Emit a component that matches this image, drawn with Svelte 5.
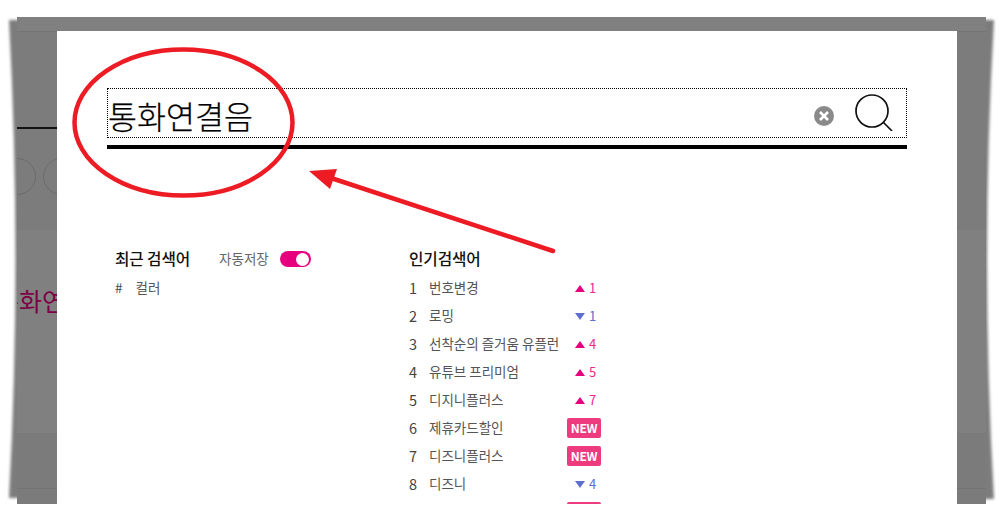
<script>
  const recent = [{ rank: '#', label: '컬러' }];
  const popular = [
    { rank: 1, label: '번호변경', dir: 'up', n: 1 },
    { rank: 2, label: '로밍', dir: 'down', n: 1 },
    { rank: 3, label: '선착순의 즐거움 유플런', dir: 'up', n: 4 },
    { rank: 4, label: '유튜브 프리미엄', dir: 'up', n: 5 },
    { rank: 5, label: '디지니플러스', dir: 'up', n: 7 },
    { rank: 6, label: '제휴카드할인', dir: 'new' },
    { rank: 7, label: '디즈니플러스', dir: 'new' },
    { rank: 8, label: '디즈니', dir: 'down', n: 4 },
    { rank: 9, label: '', dir: 'new' }
  ];
</script>

<div class="stage">
  <svg class="shadow" width="1003" height="521" viewBox="0 0 1003 521" aria-hidden="true">
    <defs><filter id="soft" x="-5%" y="-5%" width="110%" height="110%"><feGaussianBlur stdDeviation="1.5" /></filter></defs>
    <path d="M9 20 L30 20 L30 498 L9 498 Q22 260 9 20 Z" fill="#7c7c7c" filter="url(#soft)" />
    <path d="M994 20 L970 20 L970 499 L994 499 Q980 260 994 20 Z" fill="#7c7c7c" filter="url(#soft)" />
  </svg>

  <div class="page">
    <div class="page-top"></div>
    <div class="page-head">
      <div class="head-rule"></div>
      <div class="circles"><span class="circle"></span><span class="circle"></span></div>
    </div>
    <div class="page-body"><span class="page-title">통화연결음</span></div>
    <div class="page-foot"><div class="foot-rule"></div></div>
  </div>

  <div class="modal">
    <div class="search">
      <div class="field">
        <span class="query">통화연결음</span>
        <svg class="clear" width="20" height="20" viewBox="0 0 20 20" aria-hidden="true">
          <circle cx="10" cy="10" r="10" fill="#8a8a8a" />
          <path d="M6 6 L14 14 M14 6 L6 14" stroke="#fff" stroke-width="2.6" />
        </svg>
        <svg class="glass" width="38" height="38" viewBox="0 0 38 38" aria-hidden="true">
          <circle cx="17" cy="18" r="16" fill="none" stroke="#111" stroke-width="1.7" />
          <path d="M28.5 29.5 L37 38" fill="none" stroke="#111" stroke-width="1.7" />
        </svg>
      </div>
    </div>

    <div class="columns">
      <section class="recent">
        <div class="recent-head">
          <h2>최근 검색어</h2>
          <span class="auto">자동저장</span>
          <span class="toggle"><span class="knob"></span></span>
        </div>
        {#each recent as r}
          <div class="row"><span class="rank hash">{r.rank}</span><span class="label">{r.label}</span></div>
        {/each}
      </section>

      <section class="popular">
        <h2>인기검색어</h2>
        <div class="list">
          {#each popular as p}
            <div class="row">
              <span class="rank">{p.rank}</span>
              <span class="label">{p.label}</span>
              {#if p.dir === 'new'}
                <span class="badge">NEW</span>
              {:else}
                <span class="trend {p.dir}"><i class="tri"></i><b>{p.n}</b></span>
              {/if}
            </div>
          {/each}
        </div>
      </section>
    </div>
  </div>

  <svg class="marks" width="1003" height="521" viewBox="0 0 1003 521" aria-hidden="true">
    <ellipse cx="183.5" cy="122.5" rx="109" ry="73" fill="none" stroke="#ed1c24" stroke-width="4.5" />
    <path d="M553 251 L331 178" fill="none" stroke="#ed1c24" stroke-width="4.5" stroke-linecap="round" />
    <path d="M309 171 L337 169 L330 189 Z" fill="#ed1c24" />
  </svg>
</div>

<style>
  :global(body) { margin: 0; background: #fff; }
  .stage {
    position: relative;
    width: 1003px;
    height: 521px;
    overflow: hidden;
    background: #fff;
    font-family: "Noto Sans CJK KR", "Noto Sans", sans-serif;
  }
  .shadow, .marks { position: absolute; left: 0; top: 0; }
  .marks { pointer-events: none; }

  .page {
    position: absolute;
    left: 17px;
    top: 17px;
    width: 969px;
    height: 487px;
    background: #808080;
    display: flex;
    flex-direction: column;
    overflow: hidden;
  }
  .page-top { height: 14px; flex: none; border-bottom: 1px solid #747474; box-sizing: content-box; }
  .page-head { height: 198px; flex: none; background: #7c7c7c; border-bottom: 1px solid #7a7a7a; padding-top: 95px; box-sizing: border-box; }
  .head-rule { height: 1.5px; width: 40px; background: #111; }
  .circles { display: flex; gap: 7px; margin-left: -18px; margin-top: 29px; }
  .circle { width: 35px; height: 35px; border: 1px solid #6b6b6b; border-radius: 50%; }
  .page-body { height: 203px; flex: none; padding-top: 55px; box-sizing: border-box; margin-left: -21px; white-space: nowrap; }
  .page-title { font-size: 25px; line-height: 30px; color: #7d0046; }
  .page-foot { flex: 1; background: #7b7b7b; border-top: 1px solid #797979; padding-top: 54px; box-sizing: border-box; }
  .foot-rule { height: 1px; background: #737373; }

  .modal {
    position: absolute;
    left: 57px;
    top: 31px;
    width: 900px;
    height: 473px;
    background: #fff;
    overflow: hidden;
    padding: 57px 50px 0 50px;
    box-sizing: border-box;
  }
  .search { border-bottom: 4px solid #000; padding-bottom: 7px; }
  .field {
    height: 50px;
    box-sizing: border-box;
    outline: 1px dotted #000;
    outline-offset: -1px;
    display: flex;
    align-items: center;
    position: relative;
  }
  .query { flex: 1; font-size: 31.5px; line-height: 50px; color: #000; padding: 3px 0 0 1px; font-weight: 300; -webkit-text-stroke: 0.25px #000; }
  .clear { margin-right: 21px; margin-top: 5px; }
  .glass { margin-right: 14px; margin-top: -3px; }

  .columns { display: flex; padding-left: 8px; padding-top: 98px; }
  .recent { width: 294px; flex: none; }
  .popular { width: 192px; flex: none; }
  h2 { margin: 0; font-size: 15.7px; line-height: 24px; font-weight: 500; color: #111; letter-spacing: -0.1px; }
  .recent-head { display: flex; align-items: center; height: 24px; }
  .auto { margin-left: 29px; font-size: 13.5px; color: #666; line-height: 22px; margin-top: -2px; }
  .toggle {
    margin-left: 11px;
    width: 31px;
    height: 16px;
    border-radius: 8px;
    background: #e6007e;
    position: relative;
    box-sizing: border-box;
  }
  .knob {
    position: absolute;
    right: 2px;
    top: 1.5px;
    width: 13px;
    height: 13px;
    border-radius: 50%;
    background: #fff;
  }
  .row { display: flex; align-items: center; height: 28px; font-size: 13.5px; color: #555; }
  .recent .row { margin-top: 3px; }
  .list { margin-top: 3px; }
  .rank { width: 20px; flex: none; color: #444; font-size: 14.5px; padding-bottom: 2px; }
  .hash { width: 20.5px; font-size: 13.5px; }
  .label { flex: 1; white-space: nowrap; padding-bottom: 2px; }
  .trend { width: 22px; margin-right: 4px; display: flex; align-items: center; gap: 4px; font-size: 13px; flex: none; }
  .trend b { font-weight: 400; padding-bottom: 2px; }
  .trend.up b { color: #f0288a; }
  .trend.down b { color: #5f6fd0; }
  .tri { width: 0; height: 0; margin-top: 1px; border-left: 5.5px solid transparent; border-right: 5.5px solid transparent; }
  .up .tri { border-bottom: 7px solid #e6007e; }
  .down .tri { border-top: 7px solid #5f6fd0; }
  .badge {
    width: 34px;
    height: 20px;
    border-radius: 2px;
    background: #ee3a7e;
    color: #fff;
    font-size: 12px;
    font-weight: 700;
    line-height: 20px;
    text-align: center;
    letter-spacing: -0.2px;
    flex: none;
  }
</style>
